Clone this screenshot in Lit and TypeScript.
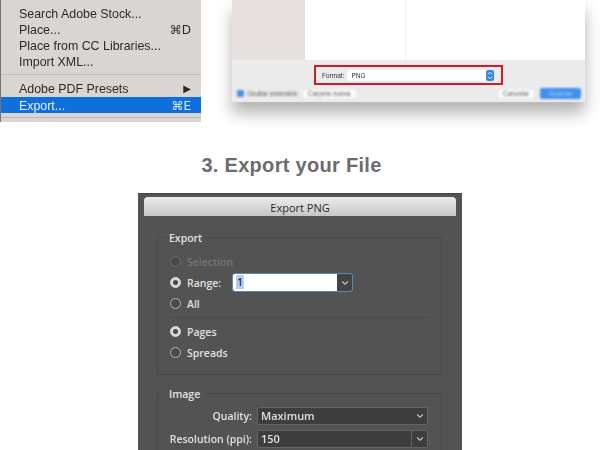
import { LitElement, html, css, svg } from 'lit';
import { customElement } from 'lit/decorators.js';

const chevron = svg`<svg class="chev" width="8" height="6" viewBox="0 0 8 6"><path d="M1.2 1.5 L4 4.3 L6.8 1.5" fill="none" stroke="#cfcfcf" stroke-width="1.1"/></svg>`;
const updown = svg`<svg width="8" height="11" viewBox="0 0 8 11"><path d="M2 4.3 L4 2.3 L6 4.3 M2 6.7 L4 8.7 L6 6.7" fill="none" stroke="#fff" stroke-width="1"/></svg>`;

@customElement('app-root')
export class AppRoot extends LitElement {
  static styles = css`
    :host {
      display: block;
      width: 600px;
      height: 450px;
      overflow: hidden;
      background: #fff;
      font-family: "Liberation Sans", Arial, sans-serif;
    }

    .top {
      display: flex;
      align-items: flex-start;
      height: 122px;
    }

    /* context menu */
    .menu {
      box-sizing: border-box;
      width: 201px;
      height: 122px;
      padding-top: 5px;
      background: #d9d5d3;
      border-left: 1px solid #77757a;
      color: #2b2a2a;
      font-size: 12.4px;
      filter: blur(0.35px);
    }
    .item {
      box-sizing: border-box;
      display: flex;
      justify-content: space-between;
      align-items: center;
      height: 16px;
      padding: 1px 10px 0 18px;
    }
    .item.active {
      margin-top: 1px;
      background: #0f6fdc;
      color: #e8f1fb;
    }
    .keys {
      font-family: "DejaVu Sans", sans-serif;
      font-size: 12px;
    }
    .arrow {
      font-size: 10px;
      font-family: "DejaVu Sans", sans-serif;
    }
    .sep {
      height: 1px;
      margin: 5px 0 5px;
      background: #c2bebc;
    }
    .menu-foot {
      height: 1px;
      margin-top: 4px;
      background: #bdb9b7;
    }

    /* save dialog */
    .save {
      display: flex;
      flex-direction: column;
      width: 353px;
      height: 102px;
      margin-left: 31px;
      box-shadow: 0 11px 15px rgba(0, 0, 0, 0.3);
    }
    .browser {
      display: flex;
      height: 60px;
      background: #fff;
    }
    .side {
      width: 73px;
      background: #e6e1df;
    }
    .col {
      width: 100px;
      border-right: 1px solid #f1f1f1;
    }
    .bar {
      display: flex;
      flex-direction: column;
      flex: 1;
      background: #ebebeb;
      font-size: 6.5px;
      color: #555;
    }
    .format-row {
      display: flex;
      justify-content: center;
      padding-top: 5px;
    }
    .format {
      box-sizing: border-box;
      display: flex;
      align-items: center;
      gap: 3px;
      width: 189px;
      height: 20px;
      padding-left: 6px;
      border: 2px solid #cf1c2b;
      color: #333;
    }
    .format span {
      filter: blur(0.35px);
    }
    .format-field {
      box-sizing: border-box;
      display: flex;
      align-items: center;
      justify-content: space-between;
      width: 147px;
      height: 11px;
      padding-left: 4px;
      background: #fff;
      border-radius: 2px;
    }
    .stepper {
      display: flex;
      width: 8px;
      height: 11px;
      background: #3a86e8;
      border-radius: 2px;
    }
    .actions {
      display: flex;
      align-items: center;
      margin-top: 3px;
      padding: 0 4px 0 5px;
      filter: blur(0.8px);
    }
    .check {
      width: 7px;
      height: 7px;
      margin-right: 3px;
      background: #4b93e6;
      border-radius: 1px;
    }
    .btn {
      display: flex;
      align-items: center;
      justify-content: center;
      height: 8px;
      background: #fbfbfb;
      border-radius: 2px;
    }
    .new {
      width: 53px;
      margin-left: 5px;
    }
    .cancel {
      width: 36px;
      margin-left: auto;
    }
    .ok {
      width: 41px;
      height: 11px;
      margin-left: 6px;
      background: #3f90f0;
      color: #a9cdf6;
    }

    h1 {
      margin: 31px 0 16px;
      padding-right: 17px;
      height: 24px;
      line-height: 24px;
      text-align: center;
      font-size: 20px;
      font-weight: bold;
      letter-spacing: 0.3px;
      color: #6c6c6e;
    }

    /* export png dialog, runs off the bottom of the page */
    .export {
      box-sizing: border-box;
      width: 324px;
      height: 264px;
      margin-left: 138px;
      padding: 3px 6px 0;
      background: #535353;
      border-top: 1px solid #454545;
      font-family: "Open Sans", sans-serif;
      font-size: 10.5px;
      font-weight: 600;
      color: #e0e0e0;
      filter: blur(0.3px);
    }
    .title {
      height: 19px;
      line-height: 21px;
      margin-bottom: 21px;
      text-align: center;
      font-size: 11px;
      font-weight: 400;
      color: #2c2c2c;
      background: linear-gradient(#ececec, #c6c6c6);
      border-radius: 4px 4px 0 0;
    }
    .group {
      box-sizing: border-box;
      position: relative;
      width: 285px;
      margin-left: 13px;
      padding: 13px 12px 0 12px;
      border: 1px solid #494949;
      border-radius: 2px;
    }
    .group.range {
      height: 138px;
      margin-bottom: 18px;
    }
    .group.image {
      height: 70px;
      padding: 10px 13px 0 0;
    }
    /* legend sits on top of the group's border */
    .legend {
      position: absolute;
      top: -7px;
      left: 6px;
      padding: 0 5px;
      background: #535353;
      line-height: 15px;
    }
    .radio-row {
      display: flex;
      align-items: center;
      height: 21px;
      gap: 6px;
    }
    .radio-row.off {
      color: #767676;
    }
    .radio {
      box-sizing: border-box;
      display: flex;
      align-items: center;
      justify-content: center;
      width: 11px;
      height: 11px;
      border: 1px solid #b8b8b8;
      border-radius: 50%;
      background: #4a4a4a;
    }
    .radio-row.off .radio {
      border-color: #6c6c6c;
    }
    .radio.on {
      background: #d8d8d8;
      border-color: #d8d8d8;
    }
    .radio.on::after {
      content: '';
      width: 5px;
      height: 5px;
      border-radius: 50%;
      background: #4a4a4a;
    }
    .range-label {
      width: 40px;
    }
    .range-input {
      display: flex;
      width: 119px;
      height: 17px;
      border-radius: 2px;
      box-shadow: 0 0 0 1px #5f86ad;
      background: #444;
    }
    .range-input .value {
      flex: 1;
      padding-left: 3px;
      background: #fff;
      line-height: 17px;
      color: #1e3a66;
      border-radius: 2px 0 0 2px;
    }
    .range-input .value span {
      background: #b5cdf0;
      padding: 0 1px;
    }
    .range-input .drop,
    .select .drop {
      display: flex;
      align-items: center;
      justify-content: center;
      width: 15px;
    }
    .rule {
      height: 1px;
      margin: 3px -2px 3px 0;
      background: #4b4b4b;
    }
    .field-row {
      display: flex;
      align-items: center;
      justify-content: flex-end;
      height: 23px;
      gap: 5px;
    }
    .select {
      box-sizing: border-box;
      display: flex;
      align-items: center;
      justify-content: space-between;
      width: 171px;
      height: 18px;
      padding-left: 3px;
      font-size: 11px;
      background: #3d3d3d;
      border: 1px solid #646464;
      border-radius: 2px;
    }
    .select.split .drop {
      height: 100%;
      border-left: 1px solid #646464;
    }
  `;

  render() {
    return html`
      <div class="top">
        <div class="menu">
          <div class="item"><span>Search Adobe Stock...</span></div>
          <div class="item"><span>Place...</span><span class="keys">⌘D</span></div>
          <div class="item"><span>Place from CC Libraries...</span></div>
          <div class="item"><span>Import XML...</span></div>
          <div class="sep"></div>
          <div class="item"><span>Adobe PDF Presets</span><span class="arrow">▶</span></div>
          <div class="item active"><span>Export...</span><span class="keys">⌘E</span></div>
          <div class="menu-foot"></div>
        </div>

        <div class="save">
          <div class="browser">
            <div class="side"></div>
            <div class="col"></div>
          </div>
          <div class="bar">
            <div class="format-row">
              <div class="format">
                <span>Format:</span>
                <div class="format-field"><span>PNG</span><div class="stepper">${updown}</div></div>
              </div>
            </div>
            <div class="actions">
              <div class="check"></div>
              <span>Ocultar extensión</span>
              <div class="btn new">Carpeta nueva</div>
              <div class="btn cancel">Cancelar</div>
              <div class="btn ok">Guardar</div>
            </div>
          </div>
        </div>
      </div>

      <h1>3. Export your File</h1>

      <div class="export">
        <div class="title">Export PNG</div>

        <div class="group range">
          <div class="legend">Export</div>
          <div class="radio-row off"><div class="radio"></div>Selection</div>
          <div class="radio-row">
            <div class="radio on"></div>
            <span class="range-label">Range:</span>
            <div class="range-input">
              <div class="value"><span>1</span></div>
              <div class="drop">${chevron}</div>
            </div>
          </div>
          <div class="radio-row"><div class="radio"></div>All</div>
          <div class="rule"></div>
          <div class="radio-row"><div class="radio on"></div>Pages</div>
          <div class="radio-row"><div class="radio"></div>Spreads</div>
        </div>

        <div class="group image">
          <div class="legend">Image</div>
          <div class="field-row">
            <span>Quality:</span>
            <div class="select"><span>Maximum</span><div class="drop">${chevron}</div></div>
          </div>
          <div class="field-row">
            <span>Resolution (ppi):</span>
            <div class="select split"><span>150</span><div class="drop">${chevron}</div></div>
          </div>
        </div>
      </div>
    `;
  }
}
